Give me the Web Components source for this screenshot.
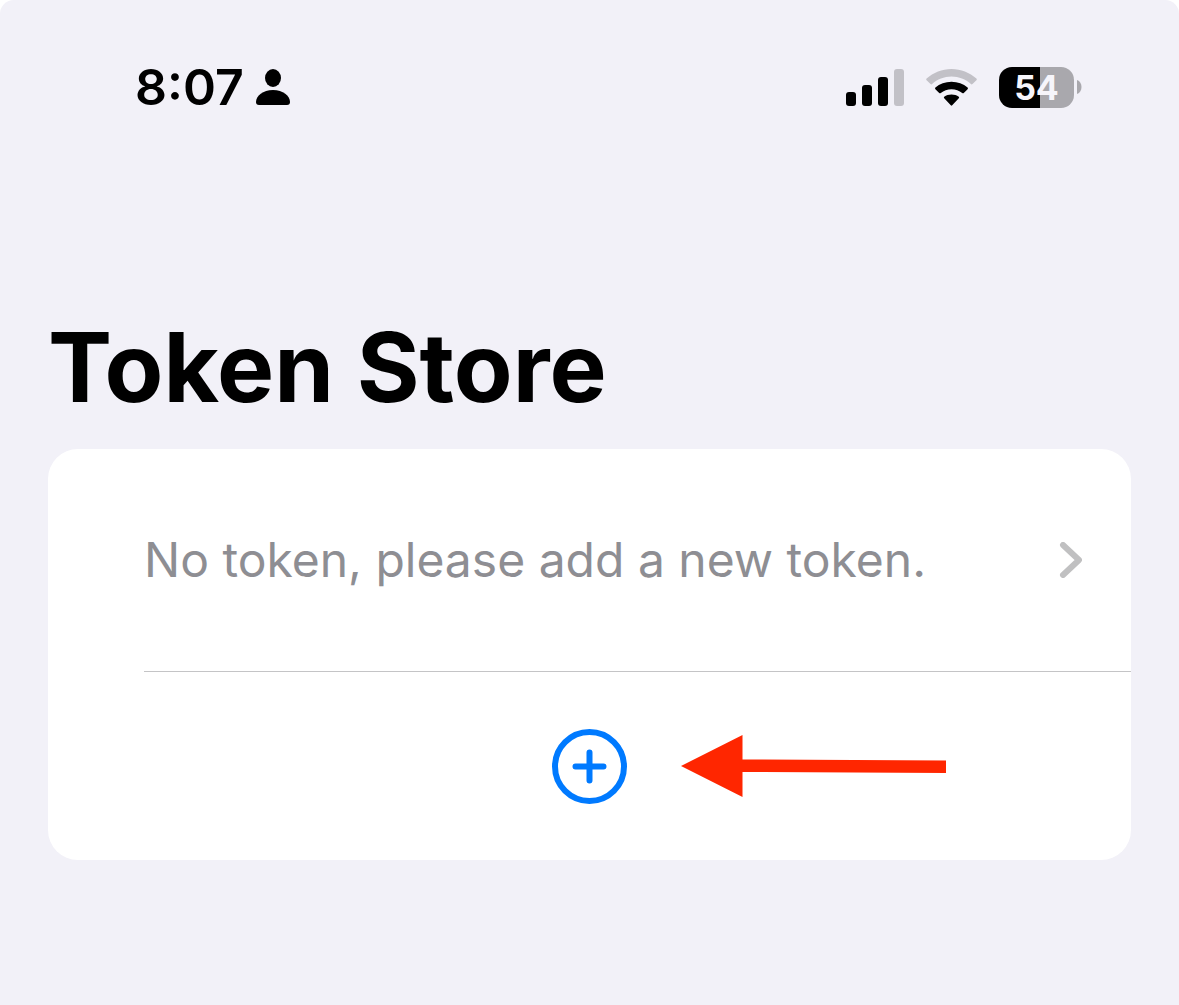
<!DOCTYPE html>
<html lang="en">
<head>
<meta charset="utf-8">
<meta name="viewport" content="width=device-width, initial-scale=1">
<title>Token Store</title>
<style>
  html { background: #fff; }
  body { margin: 0; font-family: Inter, "Liberation Sans", sans-serif; color: #000; }
</style>
</head>
<body>
<token-screen>
  <status-bar slot="status" time="8:07" battery="54"></status-bar>
  <span slot="title">Token Store</span>
  <token-card>
    <token-row href="#tokens">No token, please add a new token.</token-row>
    <add-row></add-row>
  </token-card>
</token-screen>

<script>
function define(name, render) {
  customElements.define(name, class extends HTMLElement {
    connectedCallback() {
      if (!this.shadowRoot) this.attachShadow({ mode: "open" }).innerHTML = render(this);
    }
  });
}

define("token-screen", () => `
  <style>
    :host { display: block; box-sizing: border-box; min-height: 100vh; background: #f2f1f8; border-radius: 14px 14px 0 0; padding: 0 48px; }
    header { padding-top: 55px; }
    h1 { margin: 0; padding-top: 188px; font-size: 96px; line-height: 120px; font-weight: 700; }
    main { padding-top: 22px; }
  </style>
  <header><slot name="status"></slot></header>
  <h1><slot name="title"></slot></h1>
  <main><slot></slot></main>`);

define("status-bar", el => {
  const time = el.getAttribute("time"), level = el.getAttribute("battery");
  return `
  <style>
    :host { display: flex; justify-content: space-between; align-items: center; height: 64px; padding: 0 49px 0 87px; }
    div { display: flex; align-items: center; }
    .left { gap: 12px; }
    .right { gap: 22px; }
    time { font-size: 50px; line-height: 64px; font-weight: 600; }
    svg { display: block; flex: none; }
    .battery { gap: 3px; }
    .cell { box-sizing: border-box; width: 75px; height: 41px; border-radius: 13px; justify-content: center; color: #f6f5fb;
      background: linear-gradient(to right, #000 55%, #a9a8ad 55%); font-size: 34px; line-height: 41px; font-weight: 700; }
  </style>
  <div class="left">
    <time>${time}</time>
    <svg width="34" height="36" viewBox="0 0 34 36" aria-hidden="true">
      <ellipse cx="17" cy="9" rx="8" ry="9"/>
      <path d="M3 36Q0 36 0 33C0 27 7 21 17 21S34 27 34 33Q34 36 31 36Z"/>
    </svg>
  </div>
  <div class="right">
    <svg width="58" height="37" viewBox="0 0 58 37" aria-hidden="true">
      <rect y="23" width="10" height="14" rx="3"/>
      <rect x="16" y="16" width="10" height="21" rx="3"/>
      <rect x="32" y="8" width="10" height="29" rx="3"/>
      <rect x="48" width="10" height="37" rx="3" fill="#c2c1c7"/>
    </svg>
    <svg width="51" height="37" viewBox="0 0 51 37" aria-hidden="true">
      <path fill="#c2c1c7" d="M.6 11.2Q-.2 10.4.6 9.6C7.400 3.500 16 0 25.500 0S43.600 3.500 50.400 9.600Q51.200 10.400 50.400 11.200L46.500 15Q45.700 15.800 44.900 15C39.700 10.300 32.900 7.500 25.500 7.500S11.300 10.300 6.100 15Q5.300 15.800 4.500 15Z"/>
      <path d="M9.400 20.200Q8.600 19.400 9.400 18.600C13.700 14.900 19.300 12.800 25.500 12.800S37.300 14.900 41.600 18.600Q42.400 19.400 41.600 20.200L37.800 24Q37 24.700 36.200 24C33.300 21.600 29.600 20.200 25.500 20.200S17.700 21.600 14.800 24Q14 24.700 13.200 24Z"/>
      <path d="M18.200 29.200Q17.400 28.400 18.200 27.700C20.200 26.300 22.700 25.500 25.500 25.500S30.800 26.300 32.800 27.700Q33.600 28.400 32.800 29.200L26.200 36.300Q25.500 37 24.800 36.300Z"/>
    </svg>
    <div class="battery">
      <div class="cell">${level}</div>
      <svg width="5" height="14" viewBox="0 0 5 14" aria-hidden="true"><path fill="#a9a8ad" d="M0 0C6 2 6 12 0 14Z"/></svg>
    </div>
  </div>`;
});

define("token-card", () => `
  <style>
    :host { display: block; background: #fff; border-radius: 30px; overflow: hidden; }
  </style>
  <slot></slot>`);

define("token-row", el => `
  <style>
    :host { display: block; padding-left: 96px; }
    a { display: flex; align-items: center; justify-content: space-between; gap: 24px; min-height: 222px;
      padding-right: 49px; border-bottom: 1px solid #c4c4c6; color: #8e8e93; text-decoration: none; font-size: 48px; line-height: 64px; }
    svg { flex: none; display: block; }
  </style>
  <a href="${el.getAttribute("href")}"><span><slot></slot></span>
    <svg width="23" height="36" viewBox="0 0 23 36" aria-hidden="true"><path d="M4 3L20 18L4 33" fill="none" stroke="#c0c0c1" stroke-width="6" stroke-linecap="round" stroke-linejoin="round"/></svg>
  </a>`);

define("add-row", () => `
  <style>
    :host { display: grid; grid-template-columns: 1fr auto 1fr; align-items: center; min-height: 188px; }
    button { grid-column: 2; border: 0; padding: 0; background: none; cursor: pointer; }
    svg { display: block; }
    .arrow { margin-left: 54px; }
  </style>
  <button type="button" aria-label="Add token">
    <svg width="75" height="75" viewBox="0 0 75 75" fill="none" stroke="#007aff" stroke-width="6" stroke-linecap="round">
      <circle cx="37.5" cy="37.5" r="34.500"/><path d="M23.500 37.500H51.500M37.500 23.500V51.500"/>
    </svg>
  </button>
  <svg class="arrow" width="265" height="62" viewBox="0 0 265 62" aria-hidden="true"><path fill="#ff2600" d="M0 31L61.500 0V24.500L265 25.500V38L61.500 37V62Z"/></svg>`);
</script>
</body>
</html>
